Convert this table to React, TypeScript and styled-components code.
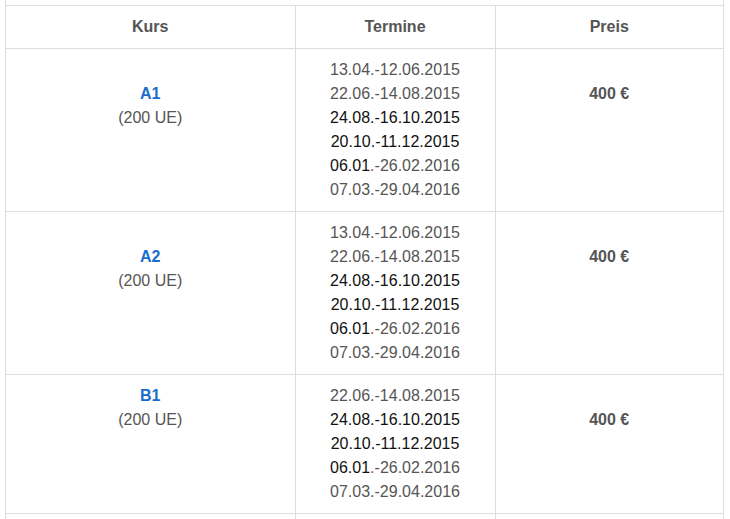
import { styled, createGlobalStyle } from 'styled-components';

interface Term {
  text : string;
  dark? : boolean;
  split? : boolean;
}

interface Course {
  name : string;
  hours : string;
  leadGap : boolean;
  terms : Term[];
  price : string;
}

const TERMS_A : Term[] = [
  { text: '13.04.-12.06.2015' },
  { text: '22.06.-14.08.2015' },
  { text: '24.08.-16.10.2015', dark: true },
  { text: '20.10.-11.12.2015', dark: true },
  { text: '06.01.-26.02.2016', split: true },
  { text: '07.03.-29.04.2016' },
];

const courses : Course[] = [
  { name: 'A1', hours: '(200 UE)', leadGap: true, terms: TERMS_A, price: '400 €' },
  { name: 'A2', hours: '(200 UE)', leadGap: true, terms: TERMS_A, price: '400 €' },
  { name: 'B1', hours: '(200 UE)', leadGap: false, terms: TERMS_A.slice(1), price: '400 €' },
];

const GlobalStyle = createGlobalStyle`
  html, body {
    margin: 0;
    padding: 0;
    background: #fff;
    overflow: hidden;
  }
  body {
    font-family: "Liberation Sans", Arial, sans-serif;
    font-size: 16px;
    color: #555;
  }
`;

const TermLine = ({ term } : { term : Term }) => {
  if (term.split) {
    const head = term.text.slice(0, 5);
    const rest = term.text.slice(6);
    return (
      <Line $dark={false}>
        <Dark>{head}</Dark><Dot>.</Dot>{rest}
      </Line>
    );
  }
  return <Line $dark={!!term.dark}>{term.text}</Line>;
};

const App = () => {
  return (
    <>
      <GlobalStyle />
      <Frame>
        <Table>
          <colgroup>
            <col style={{ width: 289 }} />
            <col style={{ width: 200 }} />
            <col />
          </colgroup>
          <thead>
            <tr>
              <HeadCell>Kurs</HeadCell>
              <HeadCell>Termine</HeadCell>
              <HeadCell>Preis</HeadCell>
            </tr>
          </thead>
          <tbody>
            {courses.map((c) => (
              <tr key={c.name}>
                <Cell>
                  {c.leadGap && <Line $dark={false}>&nbsp;</Line>}
                  <CourseName href="#">{c.name}</CourseName>
                  <Line $dark={false}>{c.hours}</Line>
                </Cell>
                <Cell>
                  {c.terms.map((t) => <TermLine key={t.text} term={t} />)}
                </Cell>
                <Cell>
                  <Line $dark={false}>&nbsp;</Line>
                  <Price>{c.price}</Price>
                </Cell>
              </tr>
            ))}
            <tr>
              <Cell />
              <Cell />
              <Cell />
            </tr>
          </tbody>
        </Table>
      </Frame>
    </>
  );
};

const Frame = styled.div`
  margin: 0 6px 0 5px;
  padding-top: 5px;
  border-left: 1px solid #ddd;
  border-right: 1px solid #ddd;
`;

const Table = styled.table`
  width: 100%;
  table-layout: fixed;
  border-collapse: collapse;
  line-height: 24px;
`;

const HeadCell = styled.th`
  padding: 9px 8px 9px;
  border-top: 1px solid #ddd;
  font-weight: bold;
  color: #555;
  text-align: center;
  & + & {
    border-left: 1px solid #ddd;
  }
`;

const Cell = styled.td`
  padding: 9px 8px 9px;
  height: 24px;
  border-top: 1px solid #ddd;
  text-align: center;
  vertical-align: top;
  & + & {
    border-left: 1px solid #ddd;
  }
`;

const Line = styled.div<{ $dark : boolean }>`
  color: ${({ $dark }) => ($dark ? '#111' : '#555')};
`;

const Dark = styled.span`
  color: #111;
`;

const Dot = styled.span`
  color: #c0392b;
`;

const CourseName = styled.a`
  display: block;
  font-weight: bold;
  color: #1a6dcc;
  text-decoration: none;
`;

const Price = styled.div`
  font-weight: bold;
  color: #555;
`;

export default App;
